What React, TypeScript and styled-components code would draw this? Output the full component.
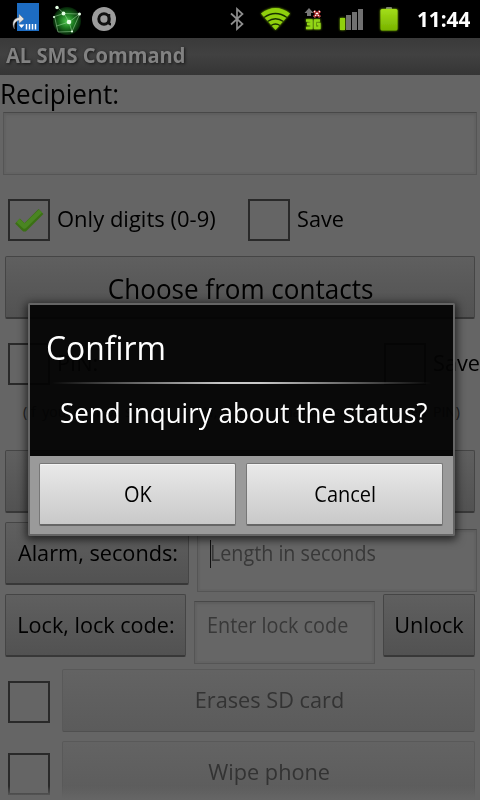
import React from "react";
import styled, { createGlobalStyle } from "styled-components";

const Global = createGlobalStyle`
  * { box-sizing: border-box; }
  html, body { margin: 0; background: #000; }
  body { width: 480px; height: 800px; overflow: hidden; font-family: "Open Sans", "Noto Sans", sans-serif; }
`;

const Screen = styled.div`
  position: relative;
  width: 480px;
  height: 800px;
  overflow: hidden;
  display: flex;
  flex-direction: column;
  background: #656565;
`;

const StatusBar = styled.header`
  height: 38px;
  flex: none;
  display: flex;
  justify-content: space-between;
  background: #000;
`;

const TitleBar = styled.div`
  height: 37px;
  flex: none;
  display: flex;
  align-items: center;
  padding: 0 0 2px 6px;
  color: #828282;
  text-shadow: 1px 1px 3px #161616;
  background: linear-gradient(#3a3a3a, #414141 45%, #353535);
`;

const Label = styled.span<{ $size?: number; $fit?: number; $bold?: boolean }>`
  display: inline-block;
  white-space: nowrap;
  font-size: ${(p) => p.$size ?? 22.5}px;
  font-weight: ${(p) => (p.$bold ? 700 : 400)};
  line-height: 1.2;
  transform: scaleX(${(p) => p.$fit ?? 0.965});
  transform-origin: left center;
`;

const CenterLabel = styled(Label)`
  transform-origin: center;
`;

const Form = styled.main`
  display: flex;
  flex-direction: column;
  color: #000;
`;

const FieldTitle = styled.div`
  height: 37px;
  padding: 3px 0 0 0;
`;

const Row = styled.div<{ $h: number; $top?: number }>`
  display: flex;
  align-items: flex-start;
  height: ${(p) => p.$h}px;
  padding-top: ${(p) => p.$top ?? 0}px;
`;

const Field = styled.div<{ $w: number; $left?: number; $top?: number }>`
  flex: none;
  width: ${(p) => p.$w}px;
  height: 63px;
  margin-left: ${(p) => p.$left ?? 3}px;
  margin-top: ${(p) => p.$top ?? 0}px;
  padding: 10px 0 0 12px;
  color: #383838;
  border: 1px solid #555;
  border-top-color: #484848;
  box-shadow: inset 0 2px 3px #5e5e5e, inset 0 0 0 2px #636363;
  background: #666;
`;

const Caret = styled.i`
  display: inline-block;
  width: 1px;
  height: 28px;
  margin: -5px -1px 0 0;
  vertical-align: middle;
  background: #111;
`;

const Box = styled.span<{ $left?: number; $top?: number }>`
  flex: none;
  display: grid;
  place-items: center;
  width: 42px;
  height: 42px;
  margin-left: ${(p) => p.$left ?? 8}px;
  margin-top: ${(p) => p.$top ?? 0}px;
  border: 2px solid #292929;
`;

const BoxText = styled.span<{ $w?: number }>`
  flex: none;
  width: ${(p) => (p.$w ? `${p.$w}px` : "auto")};
  padding: 6px 0 0 7px;
`;

const Button = styled.div<{ $w: number; $left?: number; $disabled?: boolean }>`
  flex: none;
  display: flex;
  align-items: center;
  justify-content: center;
  width: ${(p) => p.$w}px;
  height: 63px;
  margin-left: ${(p) => p.$left ?? 5}px;
  padding: 0 0 ${(p) => (p.$disabled ? 2 : 1)}px 1px;
  border: 1px solid ${(p) => (p.$disabled ? "#595959" : "#454545")};
  border-bottom: ${(p) => (p.$disabled ? "1px solid #505050" : "2px solid #383838")};
  border-radius: 2px;
  color: ${(p) => (p.$disabled ? "#333" : "#000")};
  background: ${(p) => (p.$disabled ? "linear-gradient(#636363, #5b5b5b)" : "linear-gradient(#5f5f5f, #525252)")};
`;

const LargeButton = styled(Button)`
  padding: 5px 0 0 2px;
`;

const Hint = styled.div`
  height: 40px;
  width: 437px;
  margin-left: 23px;
  font-size: 14px;
  line-height: 17px;
  white-space: nowrap;
  text-align-last: justify;
  color: #222;
`;

const BottomFade = styled.div`
  position: absolute;
  left: 0;
  right: 0;
  bottom: 0;
  height: 14px;
  background: linear-gradient(rgba(101, 101, 101, 0), #656565 90%);
`;

const Dialog = styled.section`
  position: absolute;
  left: 28px;
  top: 303px;
  width: 427px;
  height: 233px;
  display: flex;
  flex-direction: column;
  border: 2px solid #656565;
  border-radius: 2px;
  box-shadow: 0 2px 9px 2px rgba(0, 0, 0, 0.62);
  color: #fff;
`;

const DialogBody = styled.div`
  height: 151px;
  display: flex;
  flex-direction: column;
  background: rgba(3, 3, 3, 0.94);
`;

const DialogTitle = styled.div`
  height: 77px;
  padding: 23px 0 0 16px;
`;

const Divider = styled.div`
  height: 2px;
  margin: 0 22px;
  background: linear-gradient(90deg, transparent, #c8c8c8 45%, #c8c8c8 55%, transparent);
`;

const Message = styled.div`
  padding: 13px 0 0 30px;
`;

const Actions = styled.div`
  height: 78px;
  display: flex;
  gap: 10px;
  padding: 7px 9px;
  background: #9a9a9a;
`;

const Action = styled.div`
  flex: none;
  width: 197px;
  height: 63px;
  display: flex;
  align-items: center;
  justify-content: center;
  padding: 0 0 1px 1px;
  border: 1px solid #777;
  border-bottom: 2px solid #666;
  border-radius: 2px;
  color: #000;
  background: linear-gradient(#e9e9e9, #c9c9c9);
  box-shadow: inset 0 1px #f4f4f4;
`;

const LeftIcons = () => (
  <svg width="130" height="38" viewBox="0 0 130 38">
    <defs>
      <radialGradient id="globe">
        <stop offset="0" stopColor="#4fc94f" />
        <stop offset=".5" stopColor="#1c7a20" />
        <stop offset="1" stopColor="#062309" />
      </radialGradient>
    </defs>
    <rect x="17" y="3" width="22" height="28" fill="#1d6cc2" />
    <path d="M18.500 24.500h6l-3 3.500z" fill="#fff" />
    <path d="M26.500 24v5.500M29.500 24v5.500M32.500 24v5.500M35.500 24v5.500" stroke="#fff" strokeWidth="1.500" />
    <path d="M14.500 29c-3.500-6-.5-11 4.500-11.500V14l5 5-5 4.500v-3c-4 .5-5.500 4-4.500 8.500z" fill="#e4e4e4" stroke="#777" strokeWidth=".5" />
    <circle cx="67" cy="21" r="14" fill="url(#globe)" />
    <path d="M57 7l7 6.500 15.500 .5-10.500 8-5-8.500-9.500 3L58 32l14-.5 7.500-17M69 22l3 9.500M69 22l-12.500 4" stroke="#a6dfa6" strokeWidth=".8" fill="none" opacity=".65" />
    <g fill="#e4ffe4">
      <circle cx="57" cy="7.500" r="1.700" />
      <circle cx="63.500" cy="13.500" r="1.900" />
      <circle cx="79.500" cy="14" r="1.500" />
      <circle cx="69" cy="22" r="2.300" />
      <circle cx="54" cy="17" r="1.100" />
      <circle cx="72" cy="31.500" r="1.100" />
    </g>
    <circle cx="104" cy="19" r="12" fill="#9c9c9c" />
    <circle cx="104" cy="19" r="5.200" fill="none" stroke="#111" strokeWidth="3" />
    <path d="M109 14v8.500q0 1.800 2 1.800" fill="none" stroke="#111" strokeWidth="2.500" />
  </svg>
);

const RightIcons = () => (
  <svg width="190" height="38" viewBox="220 0 190 38">
    <defs>
      <linearGradient id="green" x2="0" y2="1">
        <stop offset="0" stopColor="#a3de18" />
        <stop offset="1" stopColor="#78b300" />
      </linearGradient>
      <filter id="glow" x="-30%" y="-30%" width="160%" height="160%">
        <feGaussianBlur stdDeviation="1.300" result="b" />
        <feMerge><feMergeNode in="b" /><feMergeNode in="SourceGraphic" /></feMerge>
      </filter>
    </defs>
    <path d="M231 13.500l11.500 10.500-5.500 5V9l5.500 5L231 24.500" fill="none" stroke="#8d8d8d" strokeWidth="1.700" />
    <path d="M275.500 30L261 13.500q14.500-11 29 0z" fill="#90d010" filter="url(#glow)" />
    <path d="M264 17.500q11.500-8 23 0M267.500 21.500q8-5.500 16 0M271 25.500q4.500-3 9 0" fill="none" stroke="#183000" strokeWidth="1.300" />
    <path d="M307 16v-3h-2.500l4.500-5 4.500 5H311v3z" fill="#777" />
    <path d="M314 11l6 6M320 11l-6 6" stroke="#b22a2a" strokeWidth="3" />
    <path d="M314 11l6 6M320 11l-6 6" stroke="#fff" strokeWidth="1.200" strokeDasharray="1.500 1.200" />
    <path d="M306 20.500h5.500v7.500H306M307 24h4M320 20.500h-5v7.500h4.500v-4H317" fill="none" stroke="#93d615" strokeWidth="2.300" filter="url(#glow)" />
    <rect x="340" y="18" width="5" height="12" fill="#90d010" filter="url(#glow)" />
    <path d="M346 15h5v15h-5zM352 12h5v18h-5zM358 9h5v21h-5z" fill="#707070" />
    <rect x="386" y="7" width="6" height="3" rx="1" fill="#777" />
    <rect x="380.500" y="9" width="17" height="21.500" rx="1.500" fill="url(#green)" filter="url(#glow)" />
  </svg>
);

const Clock = styled.div`
  width: 70px;
  padding: 7px 0 0 7px;
  color: #fff;
`;

const StatusRight = styled.div`
  display: flex;
`;

const Check = () => (
  <svg width="32" height="28" viewBox="0 0 32 28">
    <path d="M4.500 15l7 7L28 5.500" fill="none" stroke="#3b7014" strokeWidth="6.800" strokeLinejoin="round" />
    <path d="M5 14.500l6.500 6L27.500 5" fill="none" stroke="#4a8522" strokeWidth="4.500" strokeLinejoin="round" />
  </svg>
);

export default function App() {
  return (
    <>
      <Global />
      <Screen>
        <StatusBar>
          <LeftIcons />
          <StatusRight>
            <RightIcons />
            <Clock><Label $bold $size={21} $fit={0.985}>11:44</Label></Clock>
          </StatusRight>
        </StatusBar>
        <TitleBar><Label $bold $size={21} $fit={0.957}>AL SMS Command</Label></TitleBar>
        <Form>
          <FieldTitle><Label $size={27}>Recipient:</Label></FieldTitle>
          <Field $w={474} />
          <Row $h={81} $top={24}>
            <Box><Check /></Box>
            <BoxText $w={197}><Label $fit={0.978}>Only digits (0-9)</Label></BoxText>
            <Box $left={1} />
            <BoxText><Label>Save</Label></BoxText>
          </Row>
          <Row $h={87}>
            <LargeButton $w={470}><CenterLabel $size={27}>Choose from contacts</CenterLabel></LargeButton>
          </Row>
          <Row $h={60}>
            <Box />
            <BoxText $w={333}><Label>PIN:</Label></BoxText>
            <Box $left={1} />
            <BoxText><Label>Save</Label></BoxText>
          </Row>
          <Hint>(If you do not specify a PIN, the command uses the saved PIN)</Hint>
          <Row $h={79} $top={7}>
            <Button $w={470} />
          </Row>
          <Row $h={72}>
            <Button $w={184}><CenterLabel>Alarm, seconds:</CenterLabel></Button>
            <Field $w={280} $left={8} $top={7}><Caret /><Label $size={21.5} $fit={0.917}>Length in seconds</Label></Field>
          </Row>
          <Row $h={75}>
            <Button $w={181}><CenterLabel $fit={0.96}>Lock, lock code:</CenterLabel></Button>
            <Field $w={181} $left={8} $top={7}><Label $size={21.5} $fit={0.922}>Enter lock code</Label></Field>
            <Button $w={92} $left={8}><CenterLabel>Unlock</CenterLabel></Button>
          </Row>
          <Row $h={72}>
            <Box $top={12} />
            <Button $w={413} $left={12} $disabled><CenterLabel>Erases SD card</CenterLabel></Button>
          </Row>
          <Row $h={72}>
            <Box $top={12} />
            <Button $w={413} $left={12} $disabled><CenterLabel>Wipe phone</CenterLabel></Button>
          </Row>
        </Form>
        <BottomFade />
        <Dialog>
          <DialogBody>
            <DialogTitle><Label $size={33}>Confirm</Label></DialogTitle>
            <Divider />
            <Message><Label $size={27} $fit={0.961}>Send inquiry about the status?</Label></Message>
          </DialogBody>
          <Actions>
            <Action><CenterLabel $size={21.5} $fit={0.93}>OK</CenterLabel></Action>
            <Action><CenterLabel $size={21.5} $fit={0.93}>Cancel</CenterLabel></Action>
          </Actions>
        </Dialog>
      </Screen>
    </>
  );
}
